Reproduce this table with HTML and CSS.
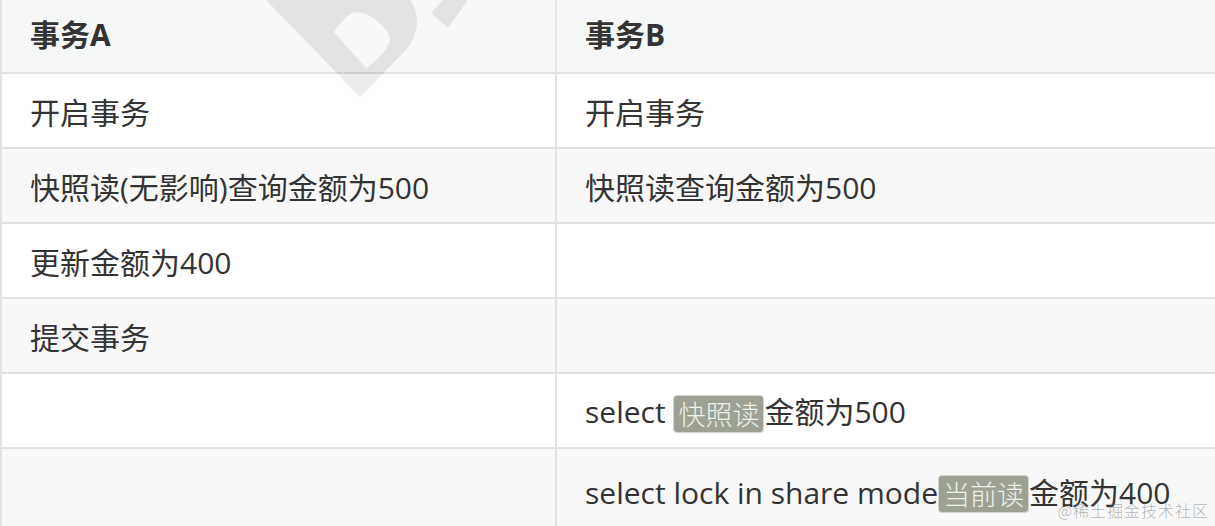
FILE: index.html
```html
<!DOCTYPE html>
<html lang="zh-CN">
<head>
<meta charset="utf-8">
<title>事务对比</title>
<link rel="stylesheet" href="styles.css">
</head>
<body>
<div class="page">
  <div class="grid">
    <div class="cell head"><span>事务A</span></div>
    <div class="cell head"><span>事务B</span></div>

    <div class="cell"><span>开启事务</span></div>
    <div class="cell"><span>开启事务</span></div>

    <div class="cell alt"><span>快照读(无影响)查询金额为500</span></div>
    <div class="cell alt"><span>快照读查询金额为500</span></div>

    <div class="cell"><span>更新金额为400</span></div>
    <div class="cell"></div>

    <div class="cell alt"><span>提交事务</span></div>
    <div class="cell alt"></div>

    <div class="cell"></div>
    <div class="cell"><span>select <code class="tag">快照读</code>金额为500</span></div>

    <div class="cell alt"></div>
    <div class="cell alt"><span>select lock in share mode<code class="tag">当前读</code>金额为400</span></div>
  </div>

  <svg class="mark" width="500" height="120" viewBox="0 0 500 120" aria-hidden="true">
    <path fill-rule="evenodd" d="M266,0 L360,97 L406,50 C420,34 420,12 410,0 Z M334,32 C342,20 350,12 357,12 C371,13 389,28 390,40 C388,50 376,62 366,68 Z"/>
    <path d="M443,0 L468,0 L448,28 L431,13 Z"/>
  </svg>

  <div class="credit">@稀土掘金技术社区</div>
</div>
</body>
</html>
```

FILE: styles.css
```css
html, body {
  margin: 0;
  padding: 0;
  background: #ffffff;
  overflow: hidden;
}

.page {
  position: relative;
  width: 1215px;
  height: 526px;
  overflow: hidden;
  font-family: "Open Sans", "Noto Sans CJK SC", sans-serif;
  color: #333333;
}

.grid {
  display: grid;
  grid-template-columns: 553px 1fr;
  grid-template-rows: 72px repeat(5, 73px) 84px;
  gap: 2px;
  padding-left: 2px;
  background: #e0e2e4;
}

.cell {
  display: flex;
  align-items: center;
  padding: 0 28px;
  background: #ffffff;
  font-size: 30px;
  white-space: nowrap;
}

.cell.head {
  background: #f6f7f7;
  font-weight: 700;
  padding-bottom: 6px;
}

.cell.alt {
  background: #f8f8f8;
}

.tag {
  display: inline-block;
  vertical-align: middle;
  font-family: "Noto Sans CJK SC", sans-serif;
  font-size: 27px;
  font-weight: 300;
  line-height: 36px;
  padding: 0 4px;
  margin-top: -3px;
  color: #eef0ea;
  background: #9ca194;
  border: 1px solid #d4d7cf;
  border-radius: 4px;
}

.mark {
  position: absolute;
  left: 0;
  top: 0;
  fill: rgba(0, 0, 0, 0.08);
  pointer-events: none;
}

.credit {
  position: absolute;
  right: 6px;
  bottom: 4px;
  font-family: "Noto Sans CJK SC", sans-serif;
  font-size: 16px;
  font-weight: 300;
  color: rgba(120, 120, 120, 0.55);
  letter-spacing: 1px;
}
```
